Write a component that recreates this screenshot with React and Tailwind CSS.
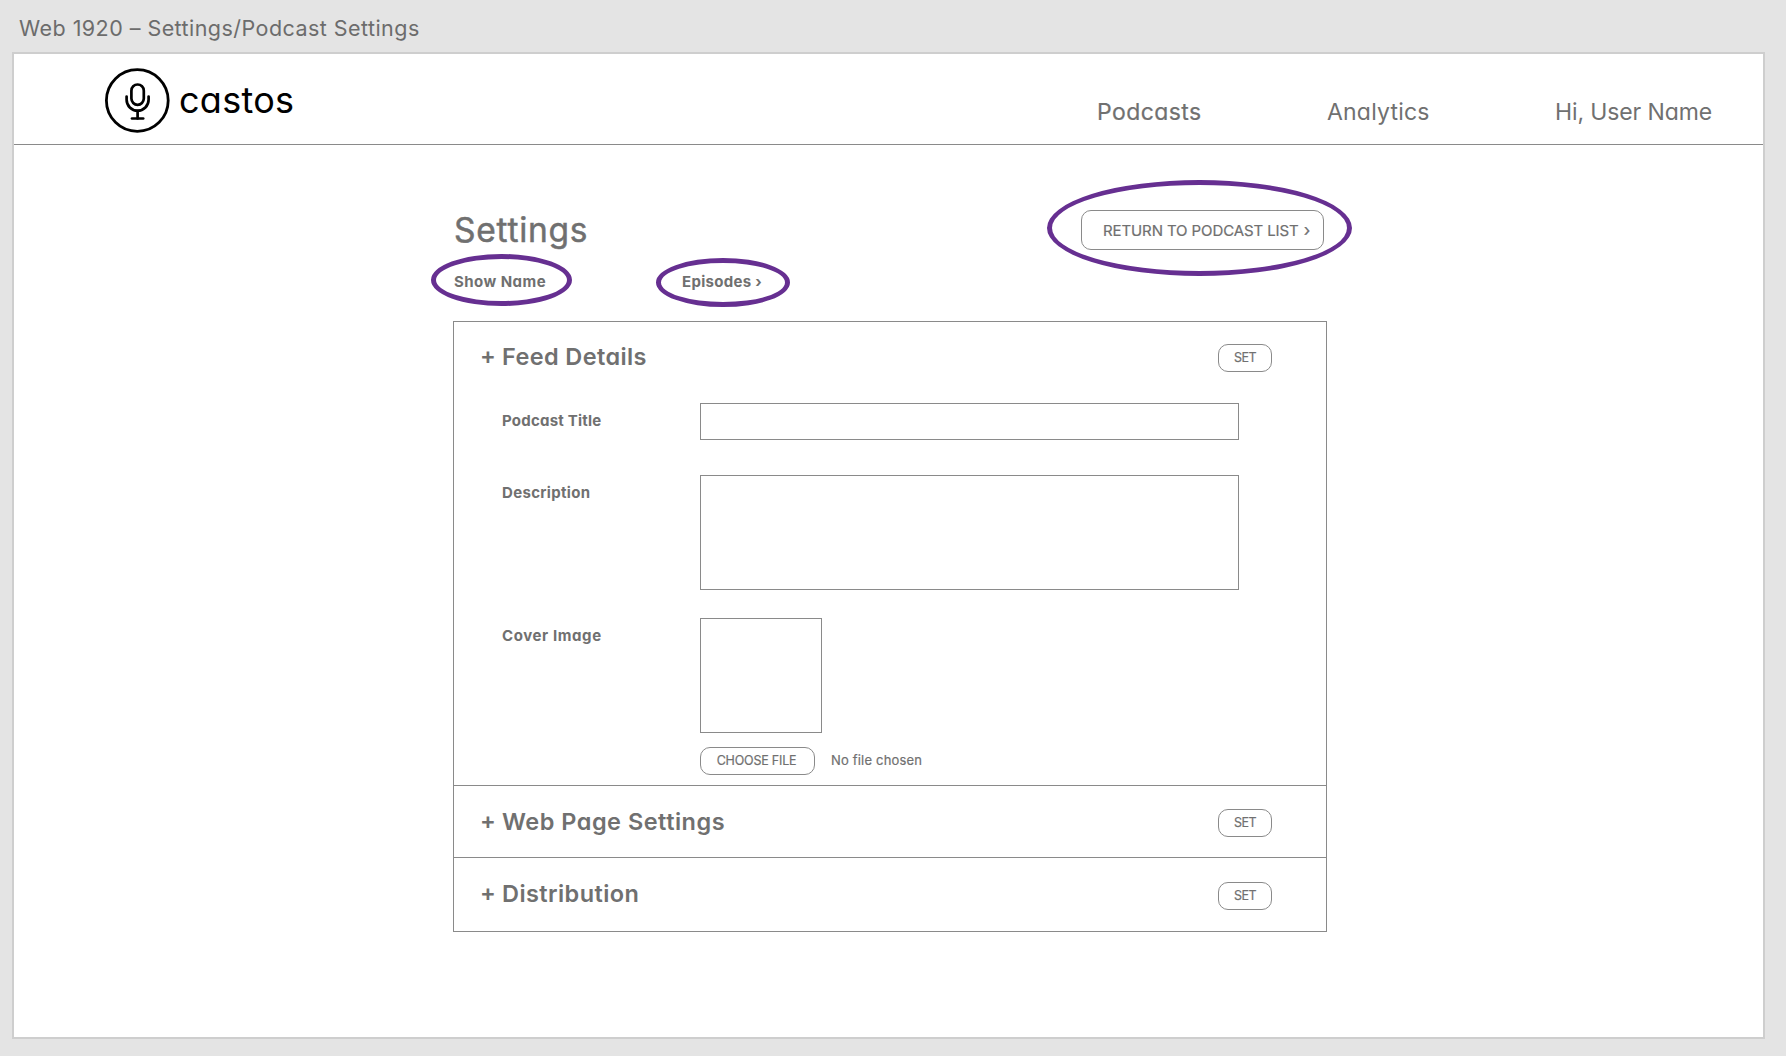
import { clsx } from "clsx";

function Logo() {
  return (
    <div className="flex items-start">
      <svg
        className="size-[66px] shrink-0"
        viewBox="0 0 66 66"
        fill="none"
        stroke="#000"
        strokeWidth="2.7"
        strokeLinecap="round"
      >
        <circle cx="33.3" cy="33.5" r="30.9" strokeWidth="2.8" />
        <rect x="27.4" y="17.5" width="12.4" height="20.3" rx="6.2" />
        <path d="M22.6 29.6v3.1a11 11 0 0 0 22 0v-3.1" />
        <path d="M33.6 44v7.4" />
        <path d="M28 51.5h11.2" />
      </svg>
      <span className="ml-[9px] text-[36px] leading-[66px] tracking-[0.28px] text-black">
        castos
      </span>
    </div>
  );
}

function Header() {
  return (
    <header className="flex h-[91px] border-b border-[#8a8a8a] pl-[90px] pt-[13px]">
      <Logo />
      <nav className="ml-auto mr-[39px] mt-[30px] grid grid-cols-[230px_228px_169px] text-[23px] leading-[30px]">
        <a className="tracking-[0.4px] [-webkit-text-stroke:0.2px_currentColor]">Podcasts</a>
        <a className="tracking-[0.2px]">Analytics</a>
        <a className="tracking-[-0.12px]">Hi, User Name</a>
      </nav>
    </header>
  );
}

function Oval({ className }) {
  return <span className={clsx("absolute rounded-[50%] border-[5px] border-[#662f91]", className)} />;
}

function PillButton({ className, children }) {
  return (
    <button
      className={clsx(
        "flex h-[28px] shrink-0 items-center justify-center rounded-[10px] border border-[#8a8a8a] pt-px text-[12.5px] leading-none [-webkit-text-stroke:0.2px_currentColor]",
        className
      )}
    >
      {children}
    </button>
  );
}

function SectionHeading({ title, className, buttonClassName, titleClassName }) {
  return (
    <div className={clsx("flex items-start pl-[26px] pr-[54px]", className)}>
      <h2 className="flex text-[23.5px] font-semibold leading-[30px]">
        <span className="w-[22px] leading-[28px]">+</span>
        <span className={titleClassName}>{title}</span>
      </h2>
      <PillButton className={clsx("ml-auto w-[54px] tracking-[-0.6px]", buttonClassName)}>SET</PillButton>
    </div>
  );
}

function Field({ label, className, labelClassName, children }) {
  return (
    <div className={clsx("flex items-start pl-[48px]", className)}>
      <label className={clsx("w-[198px] text-[15px] font-bold leading-[20px]", labelClassName)}>
        {label}
      </label>
      <div>{children}</div>
    </div>
  );
}

export default function App() {
  return (
    <div className="h-[1056px] w-[1786px] overflow-hidden bg-[#e4e4e4] pl-[12px] font-['Inter',sans-serif] text-[#707070]">
      <div className="h-[52px] pl-[7px] pt-[13px] text-[21.5px] leading-[30px] tracking-[0.45px] text-[#6c6c6c]">
        Web 1920 – Settings/Podcast Settings
      </div>
      <div className="h-[987px] w-[1753px] border-2 border-[#cecece] bg-white [font-feature-settings:'cv11']">
        <Header />
        <main className="ml-[439px] w-[874px]">
          <div className="flex h-[176px]">
            <div className="pt-[62px]">
              <h1 className="pl-px text-[33.5px] leading-[46px] tracking-[0.75px] [-webkit-text-stroke:0.5px_currentColor]">
                Settings
              </h1>
              <div className="flex pl-px pt-[19px] text-[15px] font-bold leading-[20px]">
                <a className="relative w-[228px] tracking-[0.45px]">
                  Show Name
                  <Oval className="-left-[23px] -top-[18px] h-[52px] w-[141px]" />
                </a>
                <a className="relative tracking-[0.3px]">
                  Episodes <span>›</span>
                  <Oval className="-left-[26px] -top-[14px] h-[49px] w-[134px]" />
                </a>
              </div>
            </div>
            <div className="ml-auto mr-[3px] pt-[65px]">
              <button className="relative flex h-[40px] w-[243px] items-center rounded-[10px] border border-[#8a8a8a] pl-[21px] pt-px text-[15px] leading-none tracking-[-0.1px] [-webkit-text-stroke:0.2px_currentColor]">
                RETURN TO PODCAST LIST
                <span className="mb-px ml-[5px] text-[17px]">›</span>
                <Oval className="-left-[35px] -top-[31px] h-[96px] w-[305px]" />
              </button>
            </div>
          </div>

          <div className="border border-[#8a8a8a]">
            <section className="h-[463px]">
              <SectionHeading
                title="Feed Details"
                className="pt-[20px]"
                titleClassName="tracking-[0.38px]"
                buttonClassName="mt-[2px]"
              />
              <Field label="Podcast Title" className="mt-[31px]" labelClassName="mt-[8px] tracking-[0.22px]">
                <div className="h-[37px] w-[539px] border border-[#8a8a8a]" />
              </Field>
              <Field label="Description" className="mt-[35px]" labelClassName="mt-[8px] tracking-[0.32px]">
                <div className="h-[115px] w-[539px] border border-[#8a8a8a]" />
              </Field>
              <Field label="Cover Image" className="mt-[28px]" labelClassName="mt-[8px] tracking-[0.6px]">
                <div className="h-[115px] w-[122px] border border-[#8a8a8a]" />
                <div className="mt-[14px] flex items-center">
                  <PillButton className="w-[115px] pr-[2px] tracking-[-0.2px]">CHOOSE FILE</PillButton>
                  <span className="ml-[16px] text-[13px] tracking-[0.18px] [-webkit-text-stroke:0.2px_currentColor]">
                    No file chosen
                  </span>
                </div>
              </Field>
            </section>
            <section className="h-[72px] border-t border-[#8a8a8a]">
              <SectionHeading
                title="Web Page Settings"
                className="pt-[21px]"
                titleClassName="tracking-[0.5px]"
                buttonClassName="mt-[2px]"
              />
            </section>
            <section className="h-[74px] border-t border-[#8a8a8a]">
              <SectionHeading
                title="Distribution"
                className="pt-[21px]"
                titleClassName="tracking-[0.42px]"
                buttonClassName="mt-[3px]"
              />
            </section>
          </div>
        </main>
      </div>
    </div>
  );
}
